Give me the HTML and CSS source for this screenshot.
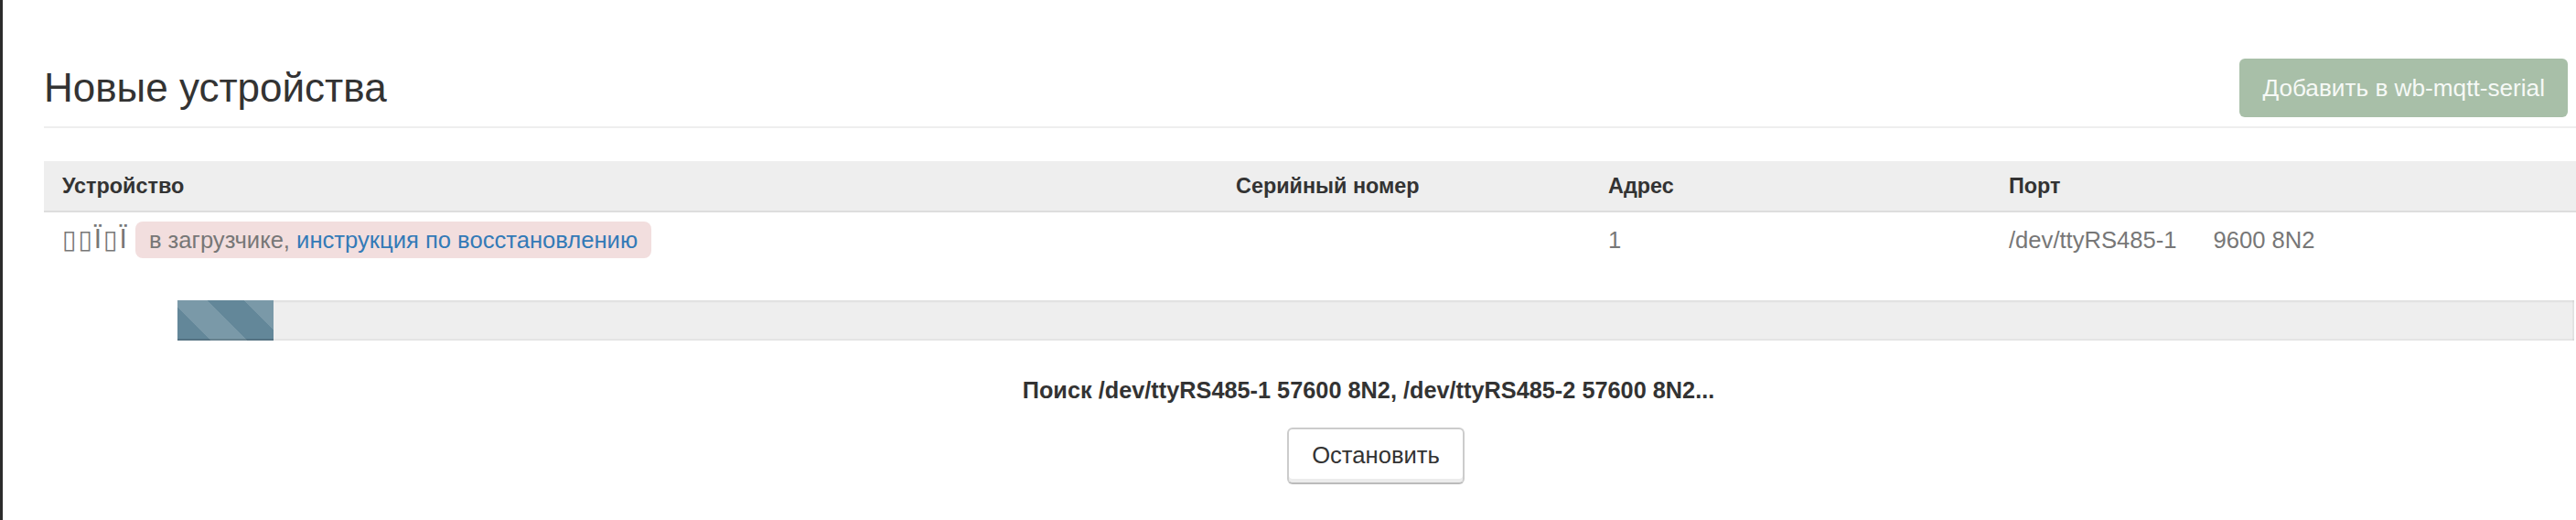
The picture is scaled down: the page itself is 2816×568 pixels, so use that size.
FILE: index.html
```html
<!DOCTYPE html>
<html lang="ru">
<head>
  <meta charset="UTF-8">
  <title>Новые устройства</title>
  <link rel="stylesheet" href="styles.css">
</head>
<body>
  <div class="page">
    <header class="page-header">
      <h2>Новые устройства</h2>
      <button class="btn btn-add" disabled>Добавить в wb-mqtt-serial</button>
    </header>

    <table class="devices">
      <colgroup>
        <col class="col-device">
        <col class="col-serial">
        <col class="col-address">
        <col>
      </colgroup>
      <thead>
        <tr>
          <th>Устройство</th>
          <th>Серийный номер</th>
          <th>Адрес</th>
          <th>Порт</th>
        </tr>
      </thead>
      <tbody>
        <tr class="muted">
          <td><span class="raw-name">▯▯Ï▯Ï</span> <span class="state">в загрузчике, <a href="#">инструкция по восстановлению</a></span></td>
          <td></td>
          <td>1</td>
          <td>/dev/ttyRS485-1<span class="port-mode">9600 8N2</span></td>
        </tr>
      </tbody>
    </table>

    <div class="scan">
      <div class="progress">
        <div class="progress-bar" style="width: 105px"></div>
      </div>
      <p class="scan-status">Поиск /dev/ttyRS485-1 57600 8N2, /dev/ttyRS485-2 57600 8N2...</p>
      <button class="btn btn-stop">Остановить</button>
    </div>
  </div>
</body>
</html>
```

FILE: styles.css
```css
body {
  margin: 0;
  font-family: "Liberation Sans", Helvetica, Arial, sans-serif;
  color: #333;
  background: #fff;
  overflow: hidden;
}
.page {
  min-height: 568px;
  border-left: 3px solid #2b2b2b;
  padding-left: 45px;
  box-sizing: border-box;
}
.page-header {
  display: flex;
  justify-content: space-between;
  align-items: center;
  padding-top: 64px;
  padding-bottom: 10px;
  border-bottom: 2px solid #eee;
}
.page-header h2 {
  margin: 0;
  font-size: 44px;
  font-weight: normal;
  line-height: 1.2;
}
.btn {
  font-family: inherit;
  font-size: 25.6px;
  border-radius: 6px;
  padding: 0 25px;
  cursor: pointer;
}
.btn-add {
  height: 64px;
  margin-right: 9px;
  font-size: 26.2px;
  border: none;
  background-color: #a8bfa8;
  color: #f6f9f6;
  cursor: not-allowed;
}

.devices {
  width: 100%;
  margin-top: 36px;
  border-collapse: separate;
  border-spacing: 0;
  table-layout: fixed;
}
.col-device { width: 1283px; }
.col-serial { width: 407px; }
.col-address { width: 438px; }
.devices th {
  padding: 0 20px;
  line-height: 54px;
  font-size: 23.4px;
  text-align: left;
  background-color: #eee;
  border-bottom: 2px solid #ddd;
}
.devices td {
  padding: 10px 20px;
  vertical-align: top;
  font-size: 25.6px;
  line-height: 40px;
  white-space: nowrap;
}
.muted td {
  color: #777;
}
.raw-name {
  font-family: "DejaVu Sans", sans-serif;
  font-size: 28px;
  letter-spacing: 2px;
}
.state {
  display: inline-block;
  padding: 0 15px;
  border-radius: 8px;
  background-color: #f2dede;
}
.state a {
  color: #337ab7;
  text-decoration: none;
}
.port-mode {
  margin-left: 40px;
}

.scan {
  margin: 36px 2px 0 146px;
  text-align: center;
}
.progress {
  height: 44px;
  background-color: #eee;
  box-shadow: inset 0 2px 2px rgba(0, 0, 0, 0.06), inset 0 -2px 0 rgba(0, 0, 0, 0.04), inset -2px 0 0 rgba(0, 0, 0, 0.04);
}
.progress-bar {
  height: 100%;
  background-color: #638799;
  background-image: linear-gradient(45deg, rgba(255, 255, 255, 0.15) 25%, transparent 25%, transparent 50%, rgba(255, 255, 255, 0.15) 50%, rgba(255, 255, 255, 0.15) 75%, transparent 75%, transparent);
  background-size: 80px 80px;
  background-position: -7px 0;
  box-shadow: inset 0 -2px 0 rgba(0, 0, 0, 0.15);
}
.scan-status {
  margin: 36px 0 0;
  padding-right: 16px;
  font-size: 25.3px;
  font-weight: bold;
  line-height: 36.6px;
}
.btn-stop {
  height: 62px;
  margin-top: 22px;
  color: #333;
  background-color: #fff;
  border: 2px solid #ccc;
  border-bottom-color: #bbb;
  box-shadow: inset 0 -4px 0 #ececec;
}
```
